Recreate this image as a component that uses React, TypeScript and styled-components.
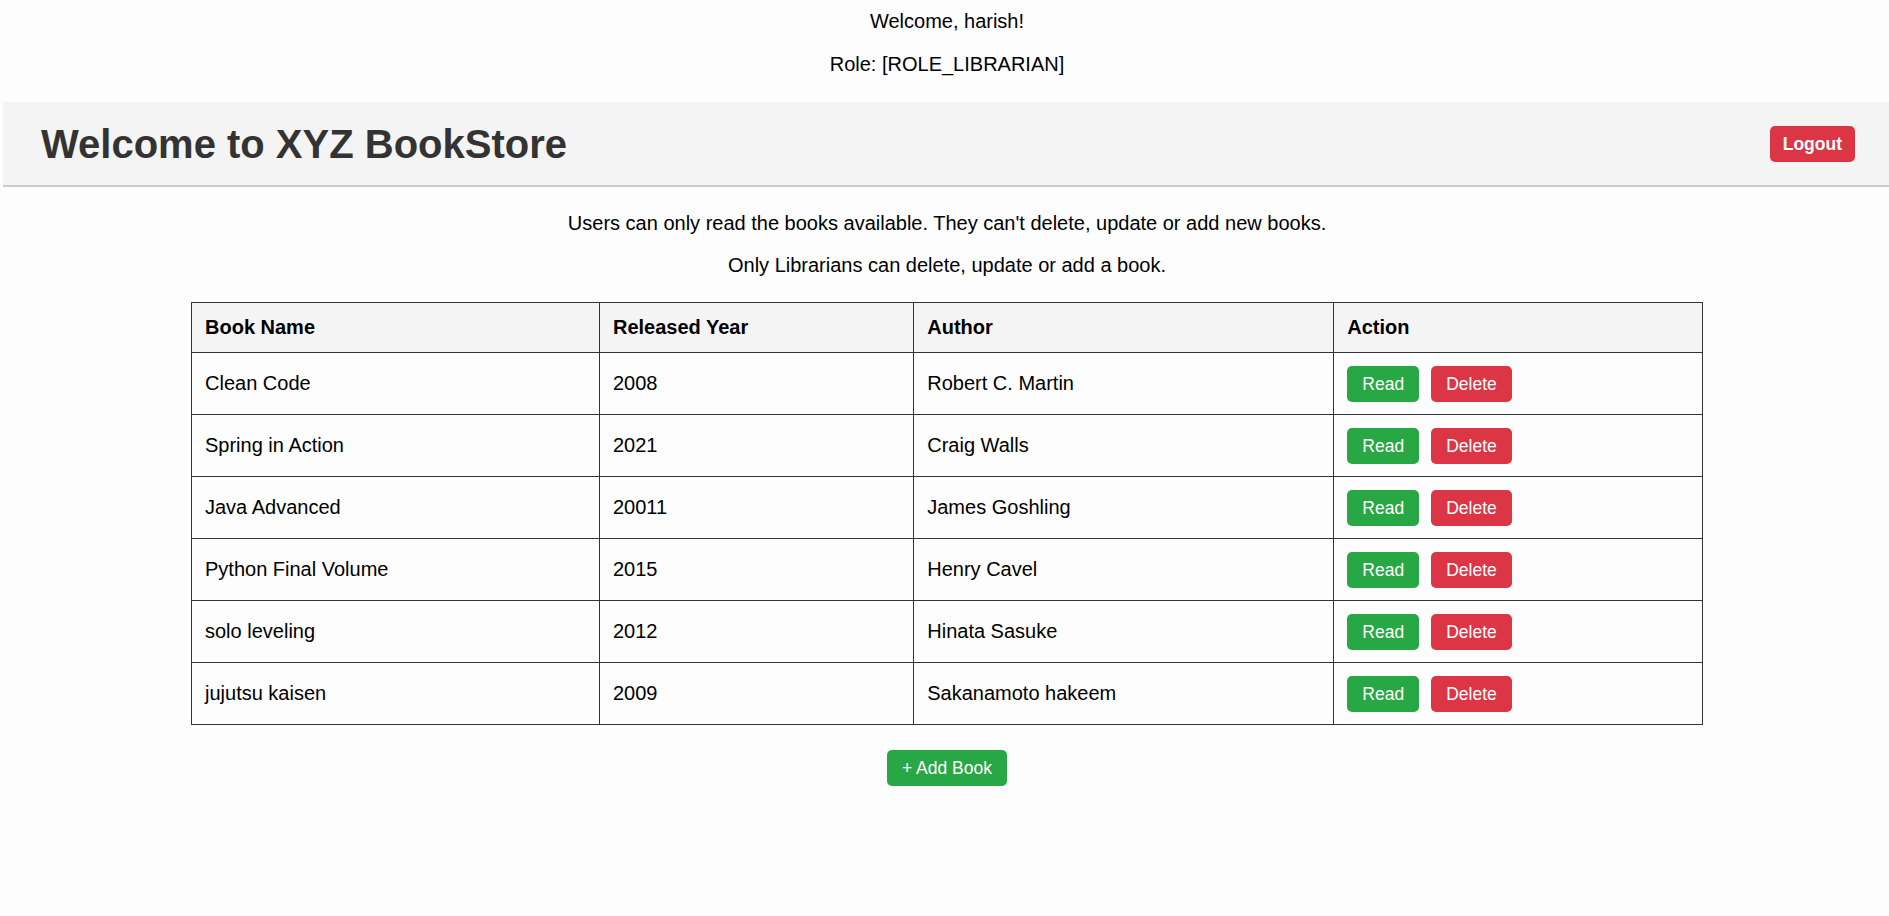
import React from "react";
import styled, { createGlobalStyle } from "styled-components";

const GlobalStyle = createGlobalStyle`
  html, body {
    margin: 0;
    padding: 0;
    background: #fdfdfd;
  }
  body {
    font-family: "Liberation Sans", Arial, sans-serif;
    font-size: 20px;
    color: #000;
  }
`;

const Page = styled.div`
  padding-left: 3px;
  min-height: 916px;
  box-sizing: border-box;
`;

const UserInfo = styled.div`
  padding-top: 10px;
  padding-bottom: 26px;
  padding-left: 2px;
  display: flex;
  flex-direction: column;
  align-items: center;
  gap: 20px;
`;

const Line = styled.p`
  margin: 0;
  line-height: 23px;
  text-align: center;
`;

const Header = styled.header`
  height: 83px;
  background: #f4f4f4;
  border-bottom: 2px solid #cccccc;
  display: flex;
  align-items: center;
  justify-content: space-between;
  padding: 0 34px 0 38px;
`;

const Title = styled.h1`
  margin: 0;
  font-size: 40px;
  font-weight: 700;
  color: #333;
  line-height: 46px;
`;

const Button = styled.button<{ $variant: "green" | "red"; $bold?: boolean }>`
  font-family: "Liberation Sans", Arial, sans-serif;
  font-size: 17.5px;
  font-weight: ${(p) => (p.$bold ? 700 : 400)};
  line-height: 20px;
  color: #fff;
  background: ${(p) => (p.$variant === "green" ? "#28a745" : "#dc3545")};
  border: none;
  border-radius: 5px;
  padding: 8px ${(p) => (p.$bold ? "13px" : "15px")};
  cursor: pointer;
`;

const Main = styled.main`
  padding-top: 25px;
  padding-left: 2px;
  display: flex;
  flex-direction: column;
  align-items: center;
`;

const Notes = styled.div`
  display: flex;
  flex-direction: column;
  align-items: center;
  gap: 19px;
  margin-bottom: 25px;
`;

const Table = styled.table`
  width: 1512px;
  border-collapse: collapse;
  table-layout: fixed;
  margin-bottom: 25px;
`;

const Col = styled.col<{ $w: string }>`
  width: ${(p) => p.$w};
`;

const Th = styled.th`
  background: #f4f4f4;
  border: 1px solid #333;
  text-align: left;
  font-weight: 700;
  padding: 13px 13px;
  line-height: 23px;
`;

const Td = styled.td`
  border: 1px solid #333;
  padding: 12.5px 13px;
  line-height: 23px;
  height: 36px;
`;

const Actions = styled.div`
  display: flex;
  gap: 12px;
`;

const books = [
  { name: "Clean Code", year: "2008", author: "Robert C. Martin" },
  { name: "Spring in Action", year: "2021", author: "Craig Walls" },
  { name: "Java Advanced", year: "20011", author: "James Goshling" },
  { name: "Python Final Volume", year: "2015", author: "Henry Cavel" },
  { name: "solo leveling", year: "2012", author: "Hinata Sasuke" },
  { name: "jujutsu kaisen", year: "2009", author: "Sakanamoto hakeem" },
];

export default function App() {
  return (
    <>
      <GlobalStyle />
      <Page>
        <UserInfo>
          <Line>Welcome, harish!</Line>
          <Line>Role: [ROLE_LIBRARIAN]</Line>
        </UserInfo>
        <Header>
          <Title>Welcome to XYZ BookStore</Title>
          <Button $variant="red" $bold>
            Logout
          </Button>
        </Header>
        <Main>
          <Notes>
            <Line>
              Users can only read the books available. They can't delete, update or add new books.
            </Line>
            <Line>Only Librarians can delete, update or add a book.</Line>
          </Notes>
          <Table>
            <colgroup>
              <Col $w="27%" />
              <Col $w="20.8%" />
              <Col $w="27.8%" />
              <Col $w="24.4%" />
            </colgroup>
            <thead>
              <tr>
                <Th>Book Name</Th>
                <Th>Released Year</Th>
                <Th>Author</Th>
                <Th>Action</Th>
              </tr>
            </thead>
            <tbody>
              {books.map((b) => (
                <tr key={b.name}>
                  <Td>{b.name}</Td>
                  <Td>{b.year}</Td>
                  <Td>{b.author}</Td>
                  <Td>
                    <Actions>
                      <Button $variant="green">Read</Button>
                      <Button $variant="red">Delete</Button>
                    </Actions>
                  </Td>
                </tr>
              ))}
            </tbody>
          </Table>
          <Button $variant="green">+ Add Book</Button>
        </Main>
      </Page>
    </>
  );
}
